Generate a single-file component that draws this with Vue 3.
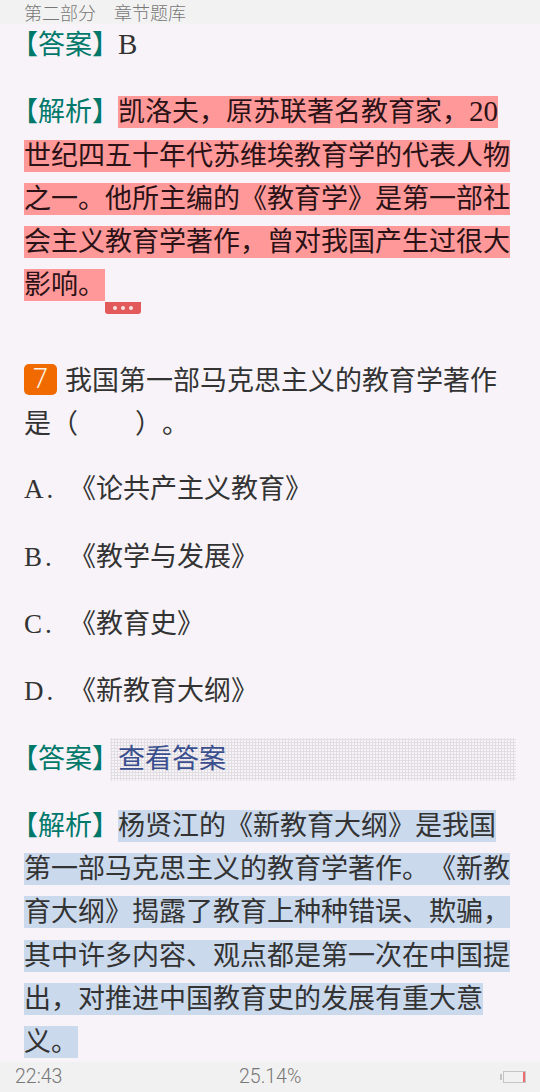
<template>
  <div class="page">
    <div class="top-bar">
      <span>第二部分</span>
      <span>章节题库</span>
    </div>

    <div class="content">
      <p class="para"><span class="tag">【答案】</span><span class="latin">B</span></p>
      <p class="para">
        <span class="tag">【解析】</span><span class="mark-red">凯洛夫，原苏联著名教育家，<span class="latin">20</span>世纪四五十年代苏维埃教育学的代表人物之一。他所主编的《教育学》是第一部社会主义教育学著作，曾对我国产生过很大影响。</span><span class="note-anchor"><span class="note-pill"><i></i><i></i><i></i></span></span>
      </p>

      <p class="para question"><span class="num">7</span>我国第一部马克思主义的教育学著作是（<span class="blank"></span>）。</p>
      <p v-for="opt in options" :key="opt.key" class="para">
        <span class="opt-key">{{ opt.key }}.</span>《{{ opt.text }}》
      </p>

      <div class="para answer-row">
        <span class="tag">【答案】</span>
        <div class="answer-cover"><span class="reveal">查看答案</span></div>
      </div>
      <p class="para">
        <span class="tag">【解析】</span><span class="mark-blue">杨贤江的《新教育大纲》是我国第一部马克思主义的教育学著作。《新教育大纲》揭露了教育上种种错误、欺骗，其中许多内容、观点都是第一次在中国提出，对推进中国教育史的发展有重大意义。</span>
      </p>
    </div>

    <div class="bottom-bar">
      <span class="time">22:43</span>
      <span class="progress">25.14%</span>
      <span class="battery"><span class="battery-level"></span></span>
    </div>
  </div>
</template>

<script setup>
const options = [
  { key: 'A', text: '论共产主义教育' },
  { key: 'B', text: '教学与发展' },
  { key: 'C', text: '教育史' },
  { key: 'D', text: '新教育大纲' }
]
</script>

<style scoped>
.page {
  width: 540px;
  height: 1092px;
  display: flex;
  flex-direction: column;
  overflow: hidden;
  background: #f7f3f8;
  color: #333;
  font-family: "Liberation Serif", "Noto Sans CJK SC", serif;
  font-size: 27px;
  line-height: 43.3px;
  text-spacing-trim: space-all;
}
.top-bar {
  height: 24px;
  flex: none;
  display: flex;
  gap: 18px;
  padding-left: 24px;
  background: #f2f2f2;
  color: #777;
  font-family: "Noto Sans CJK SC", sans-serif;
  font-size: 18px;
  font-weight: 300;
  line-height: 25px;
}
.content {
  flex: 1;
  padding: 0 30px 0 24px;
  overflow: hidden;
}
.para {
  margin: 0 0 24px;
  font-weight: 400;
}
.tag {
  flex: none;
  white-space: nowrap;
  color: #00796b;
  margin-left: -13px;
  margin-right: -1px;
}
.latin {
  font-size: 29px;
  line-height: 0;
}
.opt-key {
  display: inline-block;
  width: 45px;
  letter-spacing: 3px;
}
.mark-red {
  background: #ff9999;
  color: #2a1216;
  padding: 1px 0;
}
.mark-blue {
  background: #cbd9ec;
  padding: 1px 0;
}
.note-anchor {
  position: relative;
}
.note-pill {
  position: absolute;
  left: 0;
  top: 32px;
  width: 36px;
  height: 12px;
  display: flex;
  align-items: center;
  justify-content: center;
  gap: 4px;
  background: #e25a5a;
  border-radius: 0 0 3px 3px;
}
.note-pill i {
  width: 4px;
  height: 4px;
  border-radius: 50%;
  background: #fbe3e3;
}
.question {
  margin-top: 52px;
  margin-bottom: 22px;
}
.num {
  display: inline-block;
  vertical-align: 2px;
  width: 33px;
  height: 31px;
  margin-right: 8px;
  border-radius: 5px;
  background: #f06a00;
  color: #fdf0e4;
  font-family: "Roboto", sans-serif;
  font-size: 27px;
  font-weight: 300;
  line-height: 31px;
  text-align: center;
}
.blank {
  display: inline-block;
  width: 57px;
}
.answer-row {
  display: flex;
  align-items: center;
}
.answer-cover {
  flex: none;
  width: 406px;
  height: 43px;
  margin-left: -8px;
  padding-left: 8px;
  box-sizing: border-box;
  background-color: #f7f3f8;
  background-image: radial-gradient(circle, #e0dee1 1px, transparent 1.2px);
  background-size: 3px 3px;
}
.reveal {
  color: #3b4f8f;
}
.bottom-bar {
  height: 30px;
  flex: none;
  display: flex;
  align-items: center;
  position: relative;
  padding: 0 14px 0 15px;
  background: #f1f1f1;
  color: #777;
  font-family: "Roboto", sans-serif;
  font-size: 19.5px;
  font-weight: 300;
}
.progress {
  position: absolute;
  left: 239px;
}
.battery {
  position: relative;
  margin-left: auto;
  width: 23px;
  height: 12px;
  border: 1px solid #c4c4c4;
  box-sizing: border-box;
}
.battery::before {
  content: "";
  position: absolute;
  left: -4px;
  top: 2px;
  width: 2px;
  height: 6px;
  background: #c4c4c4;
}
.battery-level {
  position: absolute;
  right: 0;
  top: 0;
  width: 2px;
  height: 100%;
  background: #ee6a70;
}
</style>
